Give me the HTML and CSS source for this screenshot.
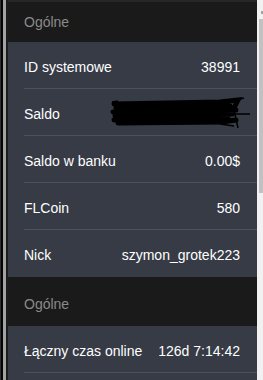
FILE: index.html
```html
<!DOCTYPE html>
<html lang="pl">
<head>
<meta charset="utf-8">
<link rel="stylesheet" href="styles.css">
</head>
<body>
<div class="frame">
  <div class="edge"></div>
  <div class="main">
    <div class="topline"></div>
    <div class="section-head first">Ogólne</div>
    <div class="panel">
      <div class="row"><span>ID systemowe</span><span>38991</span></div>
      <div class="row"><span>Saldo</span>
        <svg class="scribble" width="142" height="34" viewBox="0 0 142 34">
          <path d="M4 8 L110 6 L128 4 L124 12 M6 12 L120 10 M3 16 L126 14 M5 20 L122 18 M4 24 L118 22 M8 27 L112 26 L126 24" stroke="#000" stroke-width="5" fill="none" stroke-linecap="round"/>
          <path d="M2 6 L8 5 M116 18 L140 18 M124 14 L128 32 M120 6 L134 2 M110 28 L124 30" stroke="#000" stroke-width="1.5" fill="none"/>
        </svg>
      </div>
      <div class="row"><span>Saldo w banku</span><span>0.00$</span></div>
      <div class="row"><span>FLCoin</span><span>580</span></div>
      <div class="row last"><span>Nick</span><span>szymon_grotek223</span></div>
    </div>
    <div class="section-head">Ogólne</div>
    <div class="panel">
      <div class="row"><span>Łączny czas online</span><span>126d 7:14:42</span></div>
      <div class="row last"><span>&nbsp;</span><span></span></div>
    </div>
  </div>
  <div class="scrollbar">
    <div class="arrow"></div>
    <div class="thumb"></div>
  </div>
</div>
</body>
</html>
```

FILE: styles.css
```css
html, body {
  margin: 0;
  padding: 0;
  height: 380px;
  overflow: hidden;
  background: #1a1a1a;
  font-family: "Liberation Sans", Arial, sans-serif;
}
.frame {
  display: flex;
  height: 380px;
  overflow: hidden;
}
.edge {
  width: 8px;
  flex: none;
  background: linear-gradient(to right, #2e2e2e 0 1px, #050505 1px 3px, #a3a3a3 3px 6px, #1c1c1c 6px 8px);
}
.main {
  flex: 1;
  display: flex;
  flex-direction: column;
  min-width: 0;
  overflow: hidden;
}
.topline {
  height: 2px;
  background: #262626;
  flex: none;
}
.section-head {
  height: 49px;
  flex: none;
  background: #1a1a1a;
  color: #8a8a8a;
  font-size: 14px;
  line-height: 16px;
  padding: 19px 16px 0;
  box-sizing: border-box;
}
.section-head.first {
  height: 40px;
  padding-top: 12px;
}
.panel {
  background: #363b46;
  padding-left: 16px;
  flex: none;
}
.row {
  height: 47px;
  box-sizing: border-box;
  border-bottom: 1px solid #4c515b;
  display: flex;
  justify-content: space-between;
  align-items: center;
  padding: 3px 17px 0 0;
  color: #ffffff;
  font-size: 14px;
  line-height: 16px;
}
.row.last {
  border-bottom: none;
}
.scribble {
  margin-right: -12px;
  margin-top: -2px;
}
.scrollbar {
  width: 6px;
  flex: none;
  background: #f1f1f1;
  display: flex;
  flex-direction: column;
  align-items: flex-end;
}
.arrow {
  width: 2px;
  height: 3px;
  margin-top: 11px;
  background: #a3a3a3;
}
.thumb {
  width: 4px;
  height: 174px;
  margin-top: 5px;
  background: #c1c1c1;
}
```
